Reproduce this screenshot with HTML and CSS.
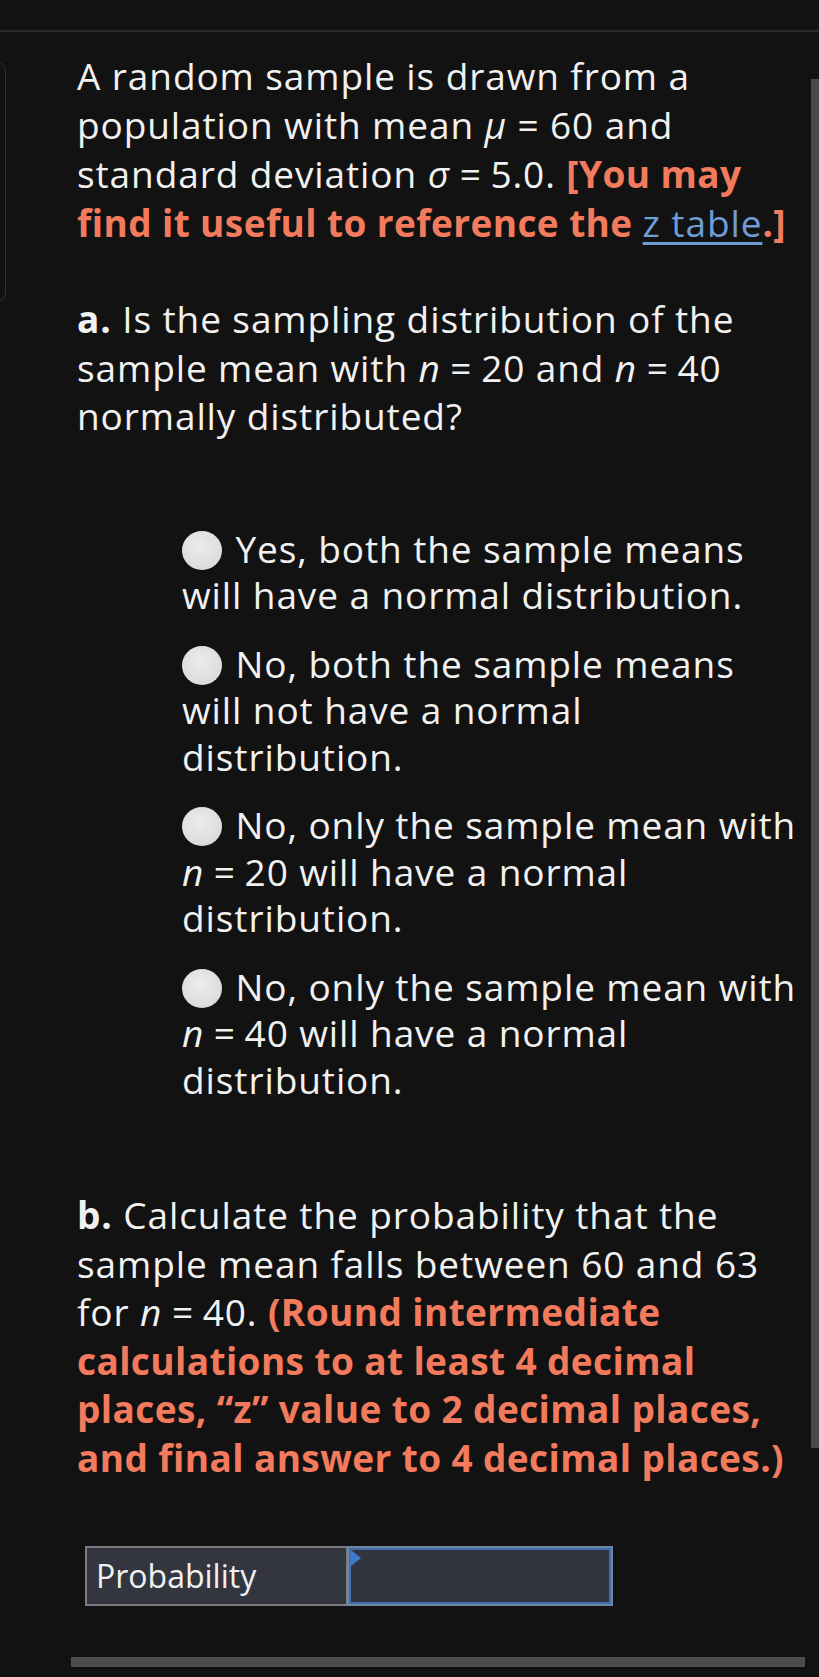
FILE: index.html
```html
<!DOCTYPE html>
<html>
<head>
<meta charset="utf-8">
<link rel="stylesheet" href="styles.css">
</head>
<body>
<div class="topbar"></div>
<div class="sidecard"></div>
<div class="scrollbar"></div>
<main class="content">
  <p class="para intro">A random sample is drawn from a population with mean <i class="m">μ</i> = 60 and standard deviation <i class="m">σ</i><span class="eq"> = </span>5.0. <b class="hint">[You may find it useful to reference the <span class="link">z table</span>.]</b></p>

  <p class="para qa"><b>a.</b> Is the sampling distribution of the sample mean with <i class="m">n</i><span class="eq"> = </span>20 and <i class="m">n</i><span class="eq"> = </span>40 normally distributed?</p>

  <div class="options">
    <p class="opt"><span class="radio"></span> Yes, both the sample means will have a normal distribution.</p>
    <p class="opt"><span class="radio"></span> No, both the sample means will not have a normal distribution.</p>
    <p class="opt"><span class="radio"></span> No, only the sample mean with <i class="m">n</i><span class="eq"> = </span>20 will have a normal distribution.</p>
    <p class="opt"><span class="radio"></span> No, only the sample mean with <i class="m">n</i><span class="eq"> = </span>40 will have a normal distribution.</p>
  </div>

  <p class="para qb"><b>b.</b> Calculate the probability that the sample mean falls between 60 and 63 for <i class="m">n</i><span class="eq"> = </span>40. <b class="hint">(Round intermediate calculations to at least 4 decimal places, “z” value to 2 decimal places, and final answer to 4 decimal places.)</b></p>

  <div class="answer">
    <div class="label">Probability</div>
    <div class="input"><span class="flag"></span></div>
  </div>
</main>
<div class="bottombar"></div>
</body>
</html>
```
FILE: styles.css
```css
html, body {
  margin: 0;
  padding: 0;
  background: #121212;
}
body {
  position: relative;
  width: 819px;
  height: 1677px;
  overflow: hidden;
  font-family: "Open Sans", "Lato", sans-serif;
  color: #f1f1f1;
}
.topbar {
  height: 30px;
  background: #131313;
  border-bottom: 2px solid #2a2a2a;
}
.sidecard {
  position: absolute;
  left: -20px;
  top: 62px;
  width: 24px;
  height: 238px;
  border: 1px solid #333;
  border-radius: 9px;
}
.scrollbar {
  position: absolute;
  left: 811px;
  top: 79px;
  width: 8px;
  height: 1369px;
  background: #4a4a4a;
}
.content {
  width: 731px;
  padding: 19px 0 0 77px;
}
.para {
  margin: 0;
  font-size: 37px;
  line-height: 48.5px;
  letter-spacing: 0.9px;
}
.intro { line-height: 49px; }
.qa { margin-top: 48px; }
.hint {
  color: #f27b5d;
  font-weight: 700;
  letter-spacing: 0.4px;
}
.link {
  color: #6e9dd6;
  font-weight: 400;
  letter-spacing: 0.9px;
  text-decoration: underline;
  text-decoration-thickness: 3px;
  text-underline-offset: 5px;
}
.m { font-style: italic; }
.eq { letter-spacing: 0; }
.options {
  margin-top: 85px;
  padding-left: 105px;
  width: 619px;
}
.opt {
  margin: 0 0 22px;
  font-size: 37px;
  line-height: 46.5px;
  letter-spacing: 0.9px;
}
.radio {
  display: inline-block;
  width: 40px;
  height: 39px;
  border-radius: 50%;
  background: radial-gradient(circle at 45% 40%, #ececec 0%, #dcdcdc 70%, #c8c8c8 100%);
  vertical-align: -7px;
  margin-right: 3px;
}
.qb { margin-top: 88px; }
.answer {
  display: flex;
  margin: 64px 0 0 8px;
  width: 528px;
  height: 60px;
}
.label {
  width: 262px;
  background: #33363f;
  border: 2px solid #7a7b80;
  border-right-width: 1px;
  font-size: 32px;
  line-height: 56px;
  padding-left: 9px;
  box-sizing: border-box;
}
.input {
  position: relative;
  flex: 1;
  background: #323540;
  border: 2px solid #6d86a6;
  box-shadow: inset 0 0 0 2px #3f6ea8;
}
.flag {
  position: absolute;
  left: 2px;
  top: 2px;
  width: 0;
  height: 0;
  border-top: 8px solid transparent;
  border-bottom: 8px solid transparent;
  border-left: 10px solid #3c7ad0;
}
.bottombar {
  position: absolute;
  left: 71px;
  top: 1657px;
  width: 734px;
  height: 10px;
  background: #4d4d4d;
}
```
